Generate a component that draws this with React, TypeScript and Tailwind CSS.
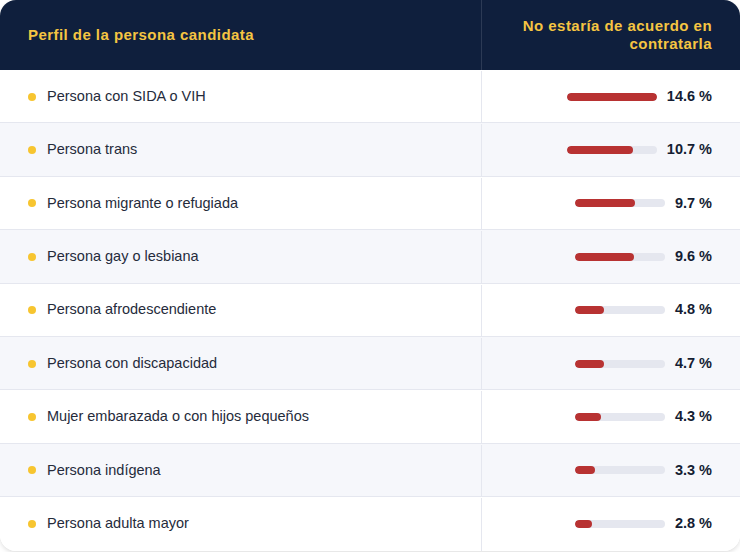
const rows = [
  { label: 'Persona con SIDA o VIH', value: 14.6 },
  { label: 'Persona trans', value: 10.7 },
  { label: 'Persona migrante o refugiada', value: 9.7 },
  { label: 'Persona gay o lesbiana', value: 9.6 },
  { label: 'Persona afrodescendiente', value: 4.8 },
  { label: 'Persona con discapacidad', value: 4.7 },
  { label: 'Mujer embarazada o con hijos pequeños', value: 4.3 },
  { label: 'Persona indígena', value: 3.3 },
  { label: 'Persona adulta mayor', value: 2.8 },
];

const max = Math.max(...rows.map((r) => r.value));

export default function App() {
  return (
    <div className="w-[740px] h-[552px] bg-white font-['Liberation_Sans',Arial,sans-serif]">
      <div className="rounded-2xl overflow-hidden shadow-[0_2px_4px_rgba(0,0,0,0.12)] bg-white">
        {/* header */}
        <div className="grid grid-cols-[481px_1fr] h-[70px] bg-[#0f1f3d] text-[#f5c542] text-[15px] font-bold tracking-[0.03em] leading-[18px]">
          <div className="flex items-center px-7">Perfil de la persona candidata</div>
          <div className="flex items-center justify-end text-right px-7 border-l border-[#2c3a55]">
            No estaría de acuerdo en contratarla
          </div>
        </div>

        {rows.map((row, i) => (
          <div
            key={row.label}
            className={
              i % 2 === 0
                ? 'grid grid-cols-[481px_1fr] h-[53.4px] pt-px bg-white border-b border-[#e5e7ef] last:border-b-0'
                : 'grid grid-cols-[481px_1fr] h-[53.4px] pt-px bg-[#f6f7fb] border-b border-[#e5e7ef]'
            }
          >
            <div className="flex items-center gap-[11px] px-7 text-[14.5px] text-[#252b3b]">
              <span className="w-2 h-2 rounded-full bg-[#f7c530] shrink-0" />
              <span>{row.label}</span>
            </div>
            <div className="flex items-center justify-end gap-[10px] px-7 border-l border-[#e5e7ef]">
              <div className="w-[90px] h-2 rounded-full bg-[#e5e7ef] overflow-hidden">
                <div
                  className="h-full rounded-full bg-[#b83232]"
                  style={{ width: `${(row.value / max) * 100}%` }}
                />
              </div>
              <span className="text-[14.5px] font-bold text-[#141d33]">{row.value} %</span>
            </div>
          </div>
        ))}
      </div>
    </div>
  );
}
